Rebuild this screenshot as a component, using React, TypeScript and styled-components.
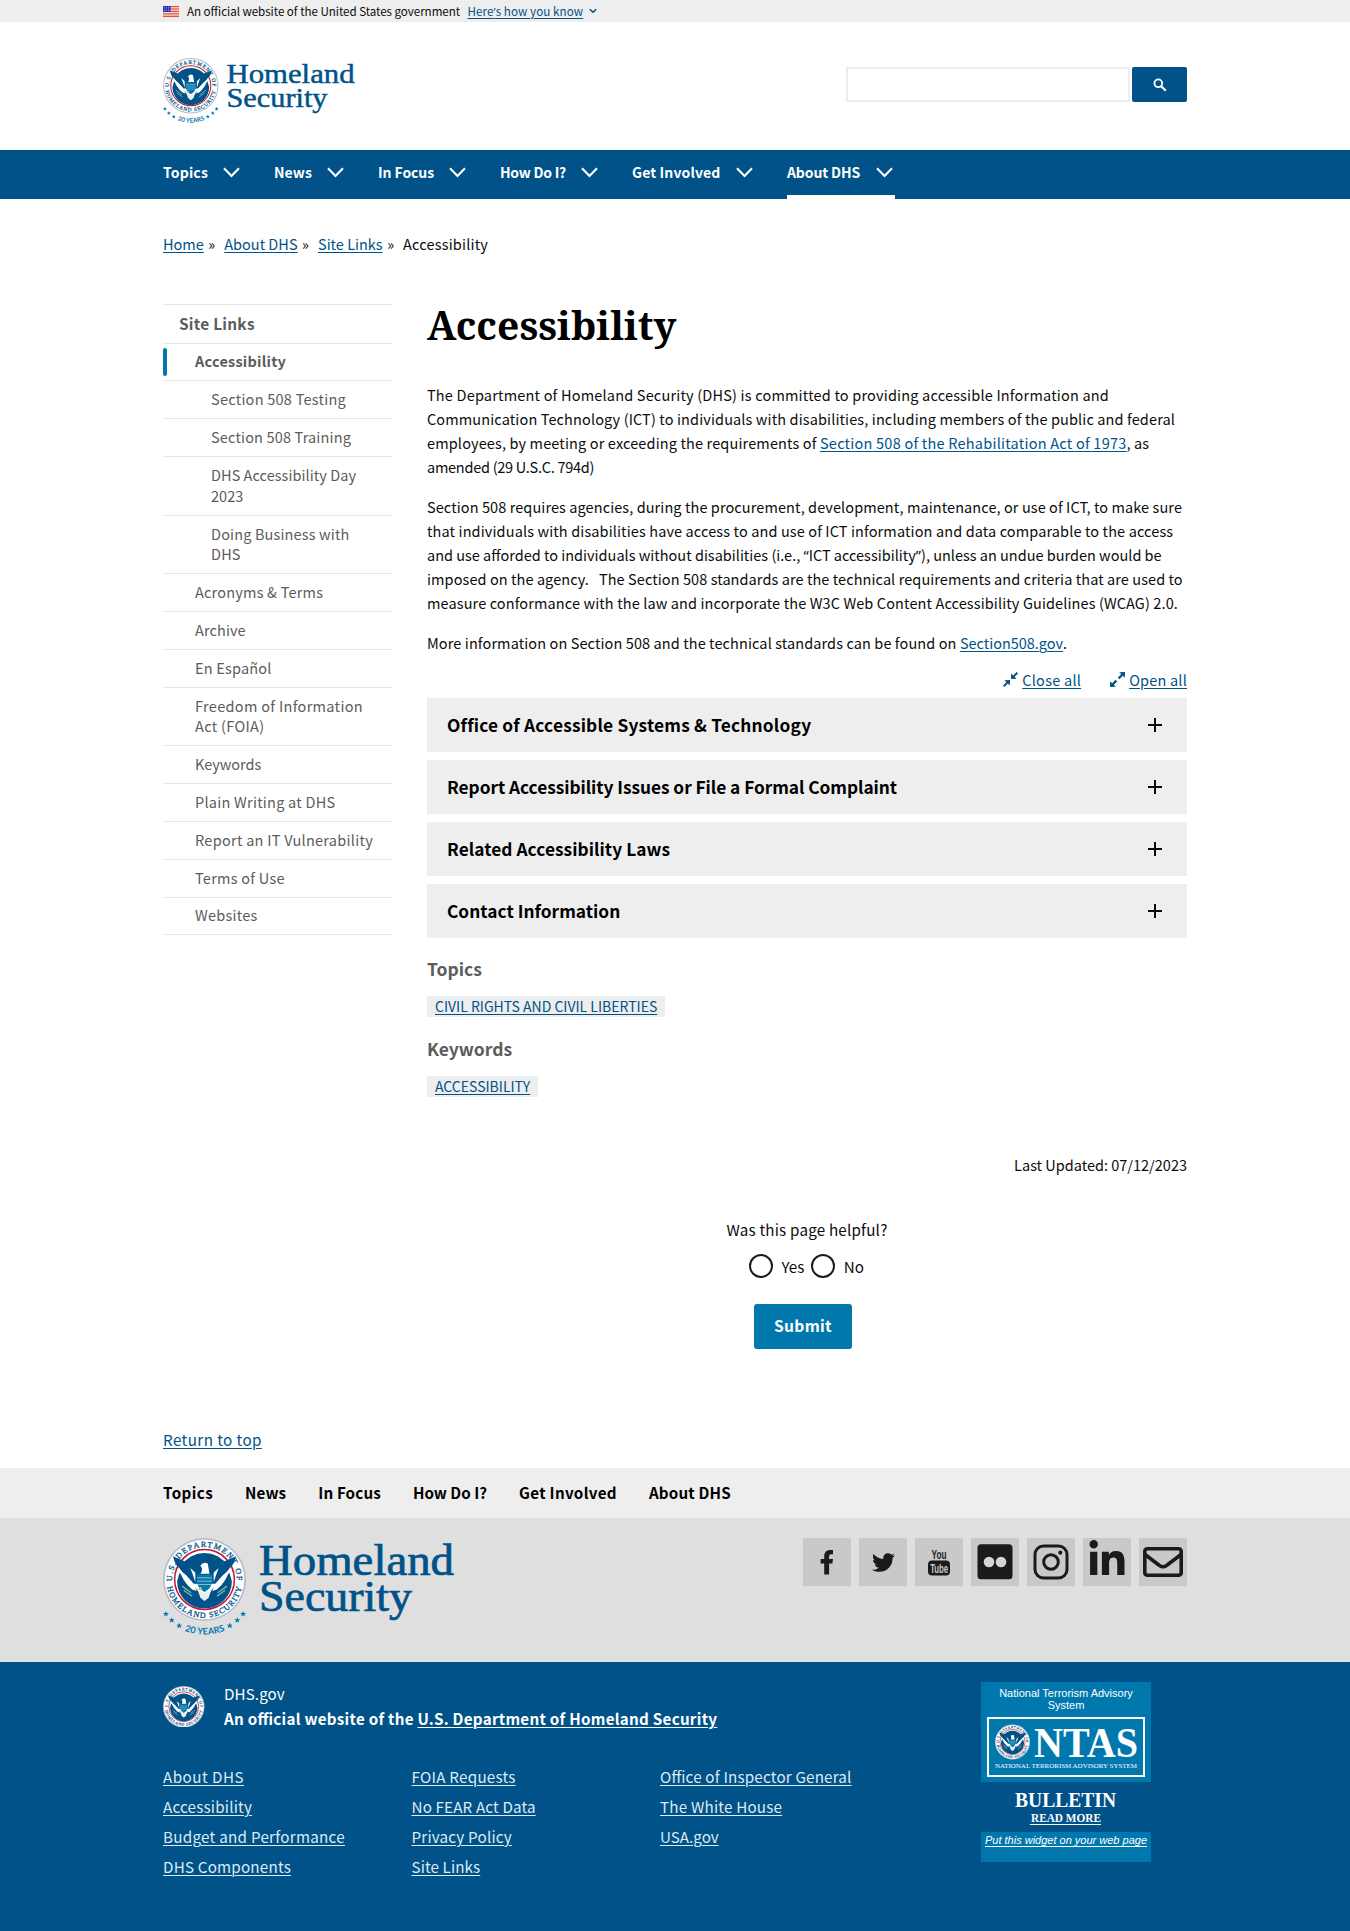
import React from "react";
import styled, { createGlobalStyle } from "styled-components";
import { FaTwitter, FaLinkedinIn } from "react-icons/fa";

const sans = '"Noto Sans CJK SC", "Noto Sans", sans-serif';
const serif = '"Liberation Serif", "Times New Roman", serif';
const blue = "#005288";
const bright = "#0078ae";

const Global = createGlobalStyle`
  * { box-sizing: border-box; }
  body { margin: 0; background: #fff; color: #0c0c0c; font-family: ${sans}; font-feature-settings: "liga" 1; }
  ul { list-style: none; margin: 0; padding: 0; }
  a { color: ${blue}; text-decoration: underline; text-decoration-thickness: 1px; text-underline-offset: 2px; }
`;

const Page = styled.div`
  width: 1350px;
  height: 1931px;
  overflow: hidden;
  display: flex;
  flex-direction: column;
`;
const Wrap = styled.div`
  width: 1024px;
  margin: 0 auto;
`;
const Tracked = styled.span<{ $ls?: number }>`
  letter-spacing: ${(p) => p.$ls ?? 0}px;
  white-space: pre;
`;
const Quote = styled.span`
  font-family: "Noto Sans", sans-serif;
`;

/* ---------- banner ---------- */
const Banner = styled.div`
  height: 22px;
  flex: none;
  background: #eeeeee;
`;
const BannerInner = styled(Wrap)`
  display: flex;
  align-items: center;
  height: 22px;
  font-size: 11.6px;
  line-height: 22px;
  white-space: nowrap;
`;
const FlagSvg = styled.svg`
  width: 16px;
  height: 11px;
  margin-right: 8px;
`;
const BannerLink = styled.a`
  margin: 0 6px 0 7.5px;
`;

function Flag() {
  return (
    <FlagSvg viewBox="0 0 16 11">
      <rect width="16" height="11" fill="#fff" />
      {[0, 1.7, 3.4, 5.1, 6.8, 8.5, 10.1].map((y) => (
        <rect key={y} y={y} width="16" height="0.9" fill="#db3e1f" />
      ))}
      <rect width="7.5" height="6" fill="#1e33b1" />
      {[1.2, 3, 4.8].map((y) =>
        [1.2, 3.2, 5.4].map((x) => <circle key={`${x}-${y}`} cx={x} cy={y} r="0.45" fill="#fff" />)
      )}
    </FlagSvg>
  );
}

/* ---------- logo ---------- */
const stars: [number, number][] = [
  [-46.5, 41.5], [-39.5, 49], [-30.5, 55.5], [30.5, 55.5], [39.5, 49], [46.5, 41.5],
];

function Seal({ id, years }: { id: string; years?: boolean }) {
  return (
    <g>
      <circle r="50" fill="#b9bdc9" />
      <circle r="48" fill="#fff" />
      <path id={`${id}-top`} d="M-38.5 6 A39 39 0 1 1 38.5 6" fill="none" />
      <path id={`${id}-bot`} d="M-45.5 7 A46 46 0 0 0 45.5 7" fill="none" />
      <g fontFamily={serif} fontSize="9.6" fill={blue} stroke={blue} strokeWidth="0.35">
        <text>
          <textPath href={`#${id}-top`} startOffset="4" textLength="126">U.S. DEPARTMENT OF</textPath>
        </text>
        <text>
          <textPath href={`#${id}-bot`} startOffset="2" textLength="126">HOMELAND SECURITY</textPath>
        </text>
      </g>
      <circle r="36" fill="#fff" stroke="#c41230" strokeWidth="1.8" />
      <path d="M-33 2 A33 33 0 0 0 33 2 L30 -8 L9 12 L0 26 L-9 12 L-30 -8 Z" fill={blue} />
      <path d="M-38 -28 L-24 -22 L-16 -28 Q0 -36 16 -28 L24 -22 L38 -28 Q35 -14 22 -5 L13 5 L-13 5 L-22 -5 Q-35 -14 -38 -28 Z" fill={blue} />
      <path d="M-32 -16 Q-24 -4 -14 5 L-9 14 L-15 12 Q-27 2 -32 -16 Z M32 -16 Q24 -4 14 5 L9 14 L15 12 Q27 2 32 -16 Z" fill="#fff" />
      <path d="M-17 -14 L-11 -8 L-11 3 Z M17 -14 L11 -8 L11 3 Z" fill="#fff" />
      <path d="M-5 -17 Q-1 -22 4 -19 Q5 -13 6 -7 L-5 -7 Q-1 -12 -5 -17 Z" fill="#fff" />
      <path d="M-9 -6 H9 V4 Q7 12 0 15 Q-7 12 -9 4 Z" fill={bright} />
      <path d="M-9 -2 H9 M-9 2 H9 M-8 6 H8" stroke="#b9d4e6" strokeWidth="0.9" />
      <path d="M-8 13 L0 17 L8 13 L5 22 L0 26 L-5 22 Z" fill="#e9eef0" />
      <circle cx="-5" cy="11" r="2" fill="#b9c46a" />
      <path d="M-27 8 L-16 16 M-25 13 L-15 20 M27 8 L16 16 M25 13 L15 20" stroke="#7fb5a0" strokeWidth="1.6" />
      {years && (
        <g fill={bright}>
          {stars.map(([x, y]) => (
            <path
              key={x}
              transform={`translate(${x} ${y})`}
              d="M0 -3.6 L1 -1.1 L3.5 -1 L1.6 .6 L2.3 3.2 L0 1.7 L-2.3 3.2 L-1.6 .6 L-3.5 -1 L-1 -1.1 Z"
            />
          ))}
          <path id={`${id}-yr`} d="M-25 61.5 Q0 71 25 61.5" fill="none" />
          <text fontFamily="Lato, sans-serif" fontSize="11" fontWeight="700">
            <textPath href={`#${id}-yr`} startOffset="1" textLength="50">20 YEARS</textPath>
          </text>
        </g>
      )}
    </g>
  );
}

const SealSvg = styled.svg<{ $size: number }>`
  width: ${(p) => p.$size}px;
  height: ${(p) => p.$size}px;
  display: block;
  flex: none;
`;

const LogoSvg = styled.svg<{ $w: number; $h: number }>`
  width: ${(p) => p.$w}px;
  height: ${(p) => p.$h}px;
  display: block;
  overflow: visible;
`;

type LogoProps = {
  id: string; w: number; h: number; r: number; x: number;
  size: number; homeW: number; secW: number; base1: number; base2: number;
};
function Logo({ id, w, h, r, x, size, homeW, secW, base1, base2 }: LogoProps) {
  return (
    <LogoSvg $w={w} $h={h} viewBox={`0 0 ${w} ${h}`}>
      <g transform={`translate(${r} ${r}) scale(${r / 50})`}>
        <Seal id={id} years />
      </g>
      <g fontFamily={serif} fontSize={size} fill={blue} stroke={blue} strokeWidth={size / 60}>
        <text x={x} y={base1} textLength={homeW} lengthAdjust="spacingAndGlyphs">Homeland</text>
        <text x={x} y={base2} textLength={secW} lengthAdjust="spacingAndGlyphs">Security</text>
      </g>
    </LogoSvg>
  );
}

/* ---------- header ---------- */
const Header = styled(Wrap)`
  height: 128px;
  flex: none;
  display: flex;
  justify-content: space-between;
  align-items: flex-start;
`;
const HeaderLogo = styled.div`
  padding-top: 36px;
`;
const Search = styled.form`
  display: flex;
  gap: 2px;
  padding-top: 45px;
`;
const SearchInput = styled.input`
  width: 284px;
  height: 35px;
  border: 2px solid #ececec;
  background: #fff;
  outline: 0;
`;
const SearchButton = styled.button`
  width: 55px;
  height: 35px;
  border: 0;
  border-radius: 2px;
  background: ${blue};
  display: flex;
  align-items: center;
  justify-content: center;
`;

/* ---------- main nav ---------- */
const Nav = styled.nav`
  height: 49px;
  flex: none;
  background: ${blue};
`;
const NavList = styled(Wrap)`
  display: flex;
  gap: 32px;
`;
const NavItem = styled.button<{ $current?: boolean; $w: number }>`
  height: 49px;
  width: ${(p) => p.$w}px;
  padding: 0 2px 5px 0;
  border: 0;
  background: none;
  box-shadow: ${(p) => (p.$current ? "inset 0 -4px 0 #fff" : "none")};
  color: #fff;
  font: 700 14px/44px ${sans};
  display: flex;
  align-items: center;
  justify-content: space-between;
  white-space: nowrap;
`;

const navItems = [
  { label: "Topics", w: 79, ls: 0.18 },
  { label: "News", w: 72, ls: 0.1 },
  { label: "In Focus", w: 90, ls: -0.08 },
  { label: "How Do I?", w: 100, ls: -0.25 },
  { label: "Get Involved", w: 123, ls: 0.13 },
  { label: "About DHS", w: 108, ls: -0.12, current: true },
];

/* ---------- breadcrumb ---------- */
const Crumbs = styled(Wrap)`
  display: flex;
  flex: none;
  gap: 9px;
  padding-top: 33px;
  font-size: 14.5px;
  line-height: 24px;
  white-space: nowrap;
`;
const Crumb = styled.span`
  display: flex;
  gap: 4.5px;
`;

/* ---------- body columns ---------- */
const Columns = styled(Wrap)`
  display: flex;
  flex: none;
  justify-content: space-between;
  height: 1171px;
`;
const Side = styled.ul`
  width: 230px;
  margin-top: 48px;
  border-bottom: 1px solid #e6e6e6;
  align-self: flex-start;
`;
const SideItem = styled.li<{ $level: number; $bold?: boolean; $current?: boolean; $ls: number }>`
  position: relative;
  border-top: 1px solid #e6e6e6;
  padding: 7.8px 0 ${(p) => (p.$level === 1 ? 9 : 8.2)}px ${(p) => p.$level * 16}px;
  font-size: ${(p) => (p.$level === 1 ? 15.4 : 14.5)}px;
  font-weight: ${(p) => (p.$bold ? 700 : 400)};
  line-height: 20.83px;
  letter-spacing: ${(p) => p.$ls}px;
  color: #5c5c5c;
  white-space: pre-line;
  &::after {
    content: "";
    display: ${(p) => (p.$current ? "block" : "none")};
    position: absolute;
    left: 0;
    top: 4px;
    bottom: 4px;
    width: 4px;
    border-radius: 99px;
    background: ${bright};
  }
`;

const sideItems = [
  { text: "Site Links", level: 1, bold: true, ls: 0.25 },
  { text: "Accessibility", level: 2, bold: true, current: true, ls: 0.23 },
  { text: "Section 508 Testing", level: 3, ls: 0.25 },
  { text: "Section 508 Training", level: 3, ls: 0.16 },
  { text: "DHS Accessibility Day\n2023", level: 3, ls: 0.05 },
  { text: "Doing Business with\nDHS", level: 3, ls: 0.15 },
  { text: "Acronyms & Terms", level: 2, ls: 0.2 },
  { text: "Archive", level: 2, ls: 0.1 },
  { text: "En Español", level: 2, ls: 0.2 },
  { text: "Freedom of Information\nAct (FOIA)", level: 2, ls: 0.32 },
  { text: "Keywords", level: 2, ls: -0.05 },
  { text: "Plain Writing at DHS", level: 2, ls: 0.25 },
  { text: "Report an IT Vulnerability", level: 2, ls: 0.28 },
  { text: "Terms of Use", level: 2, ls: 0.25 },
  { text: "Websites", level: 2, ls: 0.25 },
];

const Main = styled.main`
  width: 760px;
  display: flex;
  flex-direction: column;
`;
const Title = styled.h1`
  margin: 0;
  padding-top: 42px;
  height: 127px;
  font: 700 39px/53px "Noto Serif", "DejaVu Serif Condensed", serif;
  color: #000;
`;
const Para = styled.p`
  margin: 0 0 16px;
  font-size: 14.5px;
  line-height: 24px;
`;
const Line = styled.span<{ $ls: number }>`
  display: block;
  white-space: pre;
  letter-spacing: ${(p) => p.$ls}px;
`;
const Toggles = styled.div`
  display: flex;
  justify-content: flex-end;
  gap: 29px;
  height: 26.5px;
  font-size: 14.5px;
  line-height: 18px;
`;
const Toggle = styled.span`
  display: flex;
  gap: 4px;
  svg { margin-top: 1px; }
`;
const AccordionList = styled.div`
  display: flex;
  flex-direction: column;
  gap: 8px;
`;
const AccordionButton = styled.button`
  height: 54px;
  border: 0;
  background: #eeeeee;
  padding: 1px 24px 0 20px;
  display: flex;
  align-items: center;
  justify-content: space-between;
  font: 700 17.3px/24px ${sans};
  color: #000;
  text-align: left;
`;
const accordions: [string, number][] = [
  ["Office of Accessible Systems & Technology", 0.2],
  ["Report Accessibility Issues or File a Formal Complaint", -0.04],
  ["Related Accessibility Laws", 0.06],
  ["Contact Information", 0.03],
];
const TagTitle = styled.h2<{ $top: number }>`
  margin: ${(p) => p.$top}px 0 15px;
  font-size: 17.5px;
  line-height: 24px;
  color: #5c5c5c;
`;
const Tag = styled.a`
  align-self: flex-start;
  height: 21px;
  background: #eeeeee;
  padding: 0 8px;
  font-size: 14px;
  line-height: 20px;
`;
const Updated = styled.div`
  margin-top: 56px;
  text-align: right;
  font-size: 14.5px;
  line-height: 24px;
`;
const Feedback = styled.form`
  margin-top: 39px;
  width: 760px;
  display: flex;
  flex-direction: column;
  align-items: center;
  font-size: 15.2px;
  line-height: 26px;
`;
const Question = styled.div``;
const Radios = styled.div`
  display: flex;
  gap: 7px;
  padding: 11px 1px 0 0;
`;
const RadioLabel = styled.label`
  display: flex;
  gap: 8.5px;
  align-items: center;
`;
const Radio = styled.span`
  width: 24px;
  height: 24px;
  border: 2px solid #1b1b1b;
  border-radius: 50%;
`;
const Submit = styled.button`
  margin: 25px 8px 0 0;
  width: 98px;
  height: 45px;
  border: 0;
  border-radius: 3px;
  background: ${bright};
  color: #fff;
  font: 700 15.6px/43px ${sans};
  letter-spacing: 0.3px;
  padding: 0 0 2px;
`;
const ReturnTop = styled(Wrap)`
  flex: none;
  height: 41px;
  font-size: 15.2px;
  line-height: 25px;
`;

/* ---------- footer ---------- */
const FooterNav = styled.div`
  flex: none;
  height: 50px;
  background: #eeeeee;
`;
const FooterNavList = styled(Wrap)`
  display: flex;
  gap: 32px;
  font-size: 15.2px;
  font-weight: 700;
  line-height: 49px;
  color: #000;
`;
const Band = styled.div`
  flex: none;
  height: 144px;
  background: #dfdfdf;
`;
const BandInner = styled(Wrap)`
  display: flex;
  justify-content: space-between;
  align-items: flex-start;
  padding-top: 20px;
`;
const Social = styled.div`
  display: flex;
  gap: 8px;
`;
const Tile = styled.a`
  width: 48px;
  height: 48px;
  background: #c9c9c9;
  display: flex;
  align-items: center;
  justify-content: center;
  color: #1b1b1b;
`;
const Ident = styled.div`
  flex: 1;
  background: ${blue};
  color: #fff;
  a { color: inherit; }
`;
const IdentInner = styled(Wrap)`
  display: flex;
`;
const IdentLeft = styled.div`
  width: 818px;
  padding-top: 20px;
`;
const Agency = styled.div`
  display: flex;
  gap: 19.5px;
  height: 79px;
  padding-top: 3.5px;
`;
const AgencyText = styled.div`
  margin-top: -5px;
  font-size: 15.2px;
  line-height: 25px;
`;
const AgencyBold = styled.div`
  font-weight: 700;
`;
const LinkGrid = styled.div`
  display: flex;
`;
const LinkCol = styled.ul`
  width: 248.5px;
  font-size: 15.2px;
  line-height: 30px;
  color: #dcebf5;
`;
const linkCols: [string, number][][] = [
  [["About DHS", 0.47], ["Accessibility", 0.2], ["Budget and Performance", 0.27], ["DHS Components", 0.2]],
  [["FOIA Requests", 0.25], ["No FEAR Act Data", 0.15], ["Privacy Policy", 0.2], ["Site Links", 0.1]],
  [["Office of Inspector General", 0.18], ["The White House", 0.2], ["USA.gov", 0]],
];

const Widget = styled.div`
  margin-top: 20px;
  width: 170px;
  height: 180px;
  display: flex;
  flex-direction: column;
  font: 11px/12px "Liberation Sans", Arial, sans-serif;
  text-align: center;
`;
const WidgetTop = styled.div`
  height: 100px;
  background: ${bright};
  padding: 5px 0 0;
  display: flex;
  flex-direction: column;
  align-items: center;
`;
const NtasBox = styled.svg`
  width: 158px;
  height: 60px;
  margin-top: 6px;
`;
const Bulletin = styled.svg`
  width: 170px;
  height: 50px;
`;
const WidgetBottom = styled.div`
  height: 30px;
  padding-top: 2px;
  background: ${bright};
  font-style: italic;
  white-space: nowrap;
`;

function Ntas() {
  return (
    <NtasBox viewBox="0 0 158 60">
      <rect x="1" y="1" width="156" height="58" fill="none" stroke="#fff" strokeWidth="2" />
      <g transform="translate(25.5 25) scale(.35)"><Seal id="ntas" /></g>
      <g fontFamily={serif} fill="#fff">
        <text x="47" y="39.5" fontSize="42" fontWeight="700" textLength="104" lengthAdjust="spacingAndGlyphs">NTAS</text>
        <text x="8" y="51" fontSize="7" textLength="142" lengthAdjust="spacingAndGlyphs">NATIONAL TERRORISM ADVISORY SYSTEM</text>
      </g>
    </NtasBox>
  );
}

const LinkedInBox = styled.span`
  display: flex;
  margin-top: -5px;
`;

export default function App() {
  return (
    <>
      <Global />
      <Page>
        <Banner>
          <BannerInner>
            <Flag />
            <Tracked $ls={-0.04}>An official website of the United States government</Tracked>
            <BannerLink href="#">
              <Tracked $ls={0.08}>Here<Quote>’</Quote>s how you know</Tracked>
            </BannerLink>
            <svg width="8" height="6" viewBox="0 0 8 6">
              <path d="M.8 1.2 L4 4.3 L7.2 1.2" fill="none" stroke={blue} strokeWidth="1.5" />
            </svg>
          </BannerInner>
        </Banner>

        <Header>
          <HeaderLogo>
            <Logo id="hdr" w={193} h={68} r={27.8} x={63.5} size={28} homeW={128} secW={101} base1={25} base2={48.5} />
          </HeaderLogo>
          <Search>
            <SearchInput aria-label="Search" />
            <SearchButton type="button" aria-label="Search">
              <svg width="14" height="14" viewBox="0 0 14 14">
                <circle cx="5.3" cy="5.3" r="3.9" fill="none" stroke="#fff" strokeWidth="1.8" />
                <path d="M8.2 8.2 L12.8 12.8" stroke="#fff" strokeWidth="2.1" />
              </svg>
            </SearchButton>
          </Search>
        </Header>

        <Nav>
          <NavList>
            {navItems.map((n) => (
              <NavItem key={n.label} $current={n.current} $w={n.w}>
                <Tracked $ls={n.ls}>{n.label}</Tracked>
                <svg width="17" height="11" viewBox="0 0 17 11">
                  <path d="M1 1.2 L8.5 8.9 L16 1.2" fill="none" stroke="#fff" strokeWidth="2.1" />
                </svg>
              </NavItem>
            ))}
          </NavList>
        </Nav>

        <Crumbs>
          <Crumb><a href="#">Home</a>»</Crumb>
          <Crumb><a href="#">About DHS</a>»</Crumb>
          <Crumb><a href="#">Site Links</a>»</Crumb>
          <Crumb><Tracked $ls={0.18}>Accessibility</Tracked></Crumb>
        </Crumbs>

        <Columns>
          <Side>
            {sideItems.map((s) => (
              <SideItem key={s.text} $level={s.level} $bold={s.bold} $current={s.current} $ls={s.ls}>
                {s.text}
              </SideItem>
            ))}
          </Side>
          <Main>
            <Title><Tracked $ls={0.1}>Accessibility</Tracked></Title>
            <Para>
              <Line $ls={0.188}>The Department of Homeland Security (DHS) is committed to providing accessible Information and</Line>
              <Line $ls={0.12}>Communication Technology (ICT) to individuals with disabilities, including members of the public and federal</Line>
              <Line $ls={0.14}>employees, by meeting or exceeding the requirements of <a href="#"><Tracked $ls={0.23}>Section 508 of the Rehabilitation Act of 1973</Tracked></a>, as</Line>
              <Line $ls={-0.26}>amended (29 U.S.C. 794d)</Line>
            </Para>
            <Para>
              <Line $ls={0.088}>Section 508 requires agencies, during the procurement, development, maintenance, or use of ICT, to make sure</Line>
              <Line $ls={0.12}>that individuals with disabilities have access to and use of ICT information and data comparable to the access</Line>
              <Line $ls={0}>and use afforded to individuals without disabilities (i.e., <Quote>“</Quote>ICT accessibility<Quote>”</Quote>), unless an undue burden would be</Line>
              <Line $ls={0.08}>imposed on the agency.&nbsp; &nbsp;The Section 508 standards are the technical requirements and criteria that are used to</Line>
              <Line $ls={0.115}>measure conformance with the law and incorporate the W3C Web Content Accessibility Guidelines (WCAG) 2.0.</Line>
            </Para>
            <Para>
              <Line $ls={0.1}>More information on Section 508 and the technical standards can be found on <a href="#"><Tracked $ls={-0.02}>Section508.gov</Tracked></a>.</Line>
            </Para>
            <Toggles>
              <Toggle>
                <svg width="15" height="15" viewBox="0 0 15 15" fill={blue}>
                  <path d="M0 13.6 L3.4 10.2 L1.4 8.2 L7 8 L6.8 13.6 L4.8 11.6 L1.4 15 Z M15 1.4 L11.6 4.8 L13.6 6.8 L8 7 L8.2 1.4 L10.2 3.4 L13.6 0 Z" />
                </svg>
                <a href="#"><Tracked $ls={0.25}>Close all</Tracked></a>
              </Toggle>
              <Toggle>
                <svg width="15" height="15" viewBox="0 0 15 15" fill={blue}>
                  <path d="M0 15 L.2 9.2 L2.2 11.2 L5.6 7.8 L7.2 9.4 L3.8 12.8 L5.8 14.8 Z M15 0 L14.8 5.8 L12.8 3.8 L9.4 7.2 L7.8 5.6 L11.2 2.2 L9.2 .2 Z" />
                </svg>
                <a href="#"><Tracked $ls={0.2}>Open all</Tracked></a>
              </Toggle>
            </Toggles>
            <AccordionList>
              {accordions.map(([label, ls]) => (
                <AccordionButton key={label}>
                  <Tracked $ls={ls}>{label}</Tracked>
                  <svg width="16" height="16" viewBox="0 0 16 16">
                    <path d="M8 1 V15 M1 8 H15" stroke="#0b0b0b" strokeWidth="2" />
                  </svg>
                </AccordionButton>
              ))}
            </AccordionList>
            <TagTitle $top={19}>Topics</TagTitle>
            <Tag href="#">CIVIL RIGHTS AND CIVIL LIBERTIES</Tag>
            <TagTitle $top={20}>Keywords</TagTitle>
            <Tag href="#">ACCESSIBILITY</Tag>
            <Updated>Last Updated: 07/12/2023</Updated>
            <Feedback>
              <Question><Tracked $ls={0.2}>Was this page helpful?</Tracked></Question>
              <Radios>
                <RadioLabel><Radio />Yes</RadioLabel>
                <RadioLabel><Radio />No</RadioLabel>
              </Radios>
              <Submit type="button">Submit</Submit>
            </Feedback>
          </Main>
        </Columns>
        <ReturnTop><a href="#"><Tracked $ls={0.42}>Return to top</Tracked></a></ReturnTop>

        <FooterNav>
          <FooterNavList>
            <Tracked $ls={0.4}>Topics</Tracked>
            <Tracked $ls={0.1}>News</Tracked>
            <Tracked $ls={0.15}>In Focus</Tracked>
            <Tracked $ls={0}>How Do I?</Tracked>
            <Tracked $ls={0.3}>Get Involved</Tracked>
            <Tracked $ls={0.18}>About DHS</Tracked>
          </FooterNavList>
        </FooterNav>

        <Band>
          <BandInner>
            <Logo id="ftr" w={292} h={100} r={41.5} x={96} size={43.5} homeW={195} secW={153} base1={37} base2={73} />
            <Social>
              <Tile href="#" aria-label="Facebook">
                <svg width="48" height="48" viewBox="0 0 48 48" fill="currentColor">
                  <path d="M21.2 36.5 V25.5 H17.6 V20.9 H21.2 V18.4 Q21.2 11.9 27 11.9 H30 V16.3 H28 Q26.1 16.3 26.1 18.3 V20.9 H30 L29.4 25.5 H26.1 V36.5 Z" />
                </svg>
              </Tile>
              <Tile href="#" aria-label="Twitter"><FaTwitter size={23} /></Tile>
              <Tile href="#" aria-label="YouTube">
                <svg width="48" height="48" viewBox="0 0 48 48">
                  <rect x="13" y="22.5" width="22" height="15" rx="4" fill="#1b1b1b" />
                  <g fontFamily='"Liberation Sans Narrow", "Liberation Sans", sans-serif' fontWeight="700">
                    <text x="16.5" y="20.5" fontSize="13" fill="#1b1b1b" textLength="15" lengthAdjust="spacingAndGlyphs">You</text>
                    <text x="15.2" y="34.8" fontSize="13" fill="#c9c9c9" textLength="18" lengthAdjust="spacingAndGlyphs">Tube</text>
                  </g>
                </svg>
              </Tile>
              <Tile href="#" aria-label="Flickr">
                <svg width="48" height="48" viewBox="0 0 48 48">
                  <rect x="6.5" y="6.2" width="35" height="35" rx="3.5" fill="#1b1b1b" />
                  <circle cx="18" cy="24" r="5.3" fill="#d4d4d4" />
                  <circle cx="30" cy="24" r="5.3" fill="#d4d4d4" />
                </svg>
              </Tile>
              <Tile href="#" aria-label="Instagram">
                <svg width="48" height="48" viewBox="0 0 48 48" fill="none" stroke="#1b1b1b" strokeWidth="3">
                  <rect x="8" y="8" width="32" height="32" rx="8.5" />
                  <circle cx="24" cy="24" r="7.3" />
                  <circle cx="33.3" cy="14.7" r="2.1" fill="#1b1b1b" stroke="none" />
                </svg>
              </Tile>
              <Tile href="#" aria-label="LinkedIn">
                <LinkedInBox><FaLinkedinIn size={40} /></LinkedInBox>
              </Tile>
              <Tile href="#" aria-label="Email">
                <svg width="48" height="48" viewBox="0 0 48 48" fill="none" stroke="#1b1b1b" strokeWidth="3.6" strokeLinejoin="round">
                  <rect x="5.8" y="10.8" width="36.4" height="26.4" rx="2.5" />
                  <path d="M6 16.5 L20.5 27.5 Q24 30 27.5 27.5 L42 16.5" />
                </svg>
              </Tile>
            </Social>
          </BandInner>
        </Band>

        <Ident>
          <IdentInner>
            <IdentLeft>
              <Agency>
                <SealSvg $size={41.5} viewBox="-50 -50 100 100"><Seal id="ident" /></SealSvg>
                <AgencyText>
                  <Tracked $ls={0.1}>DHS.gov</Tracked>
                  <AgencyBold>
                    <Tracked $ls={0.27}>An official website of the <a href="#">U.S. Department of Homeland Security</a></Tracked>
                  </AgencyBold>
                </AgencyText>
              </Agency>
              <LinkGrid>
                {linkCols.map((col, i) => (
                  <LinkCol key={i}>
                    {col.map(([label, ls]) => (
                      <li key={label}><a href="#"><Tracked $ls={ls}>{label}</Tracked></a></li>
                    ))}
                  </LinkCol>
                ))}
              </LinkGrid>
            </IdentLeft>
            <Widget>
              <WidgetTop>
                National Terrorism Advisory<br />System
                <Ntas />
              </WidgetTop>
              <Bulletin viewBox="0 0 170 50">
                <g fontFamily={serif} fontWeight="700" fill="#fff">
                  <text x="34" y="25" fontSize="22" textLength="101" lengthAdjust="spacingAndGlyphs">BULLETIN</text>
                  <text x="50" y="40" fontSize="13" textLength="70" lengthAdjust="spacingAndGlyphs">READ MORE</text>
                </g>
                <path d="M49 42.5 H120" stroke="#fff" />
              </Bulletin>
              <WidgetBottom><a href="#">Put this widget on your web page</a></WidgetBottom>
            </Widget>
          </IdentInner>
        </Ident>
      </Page>
    </>
  );
}
